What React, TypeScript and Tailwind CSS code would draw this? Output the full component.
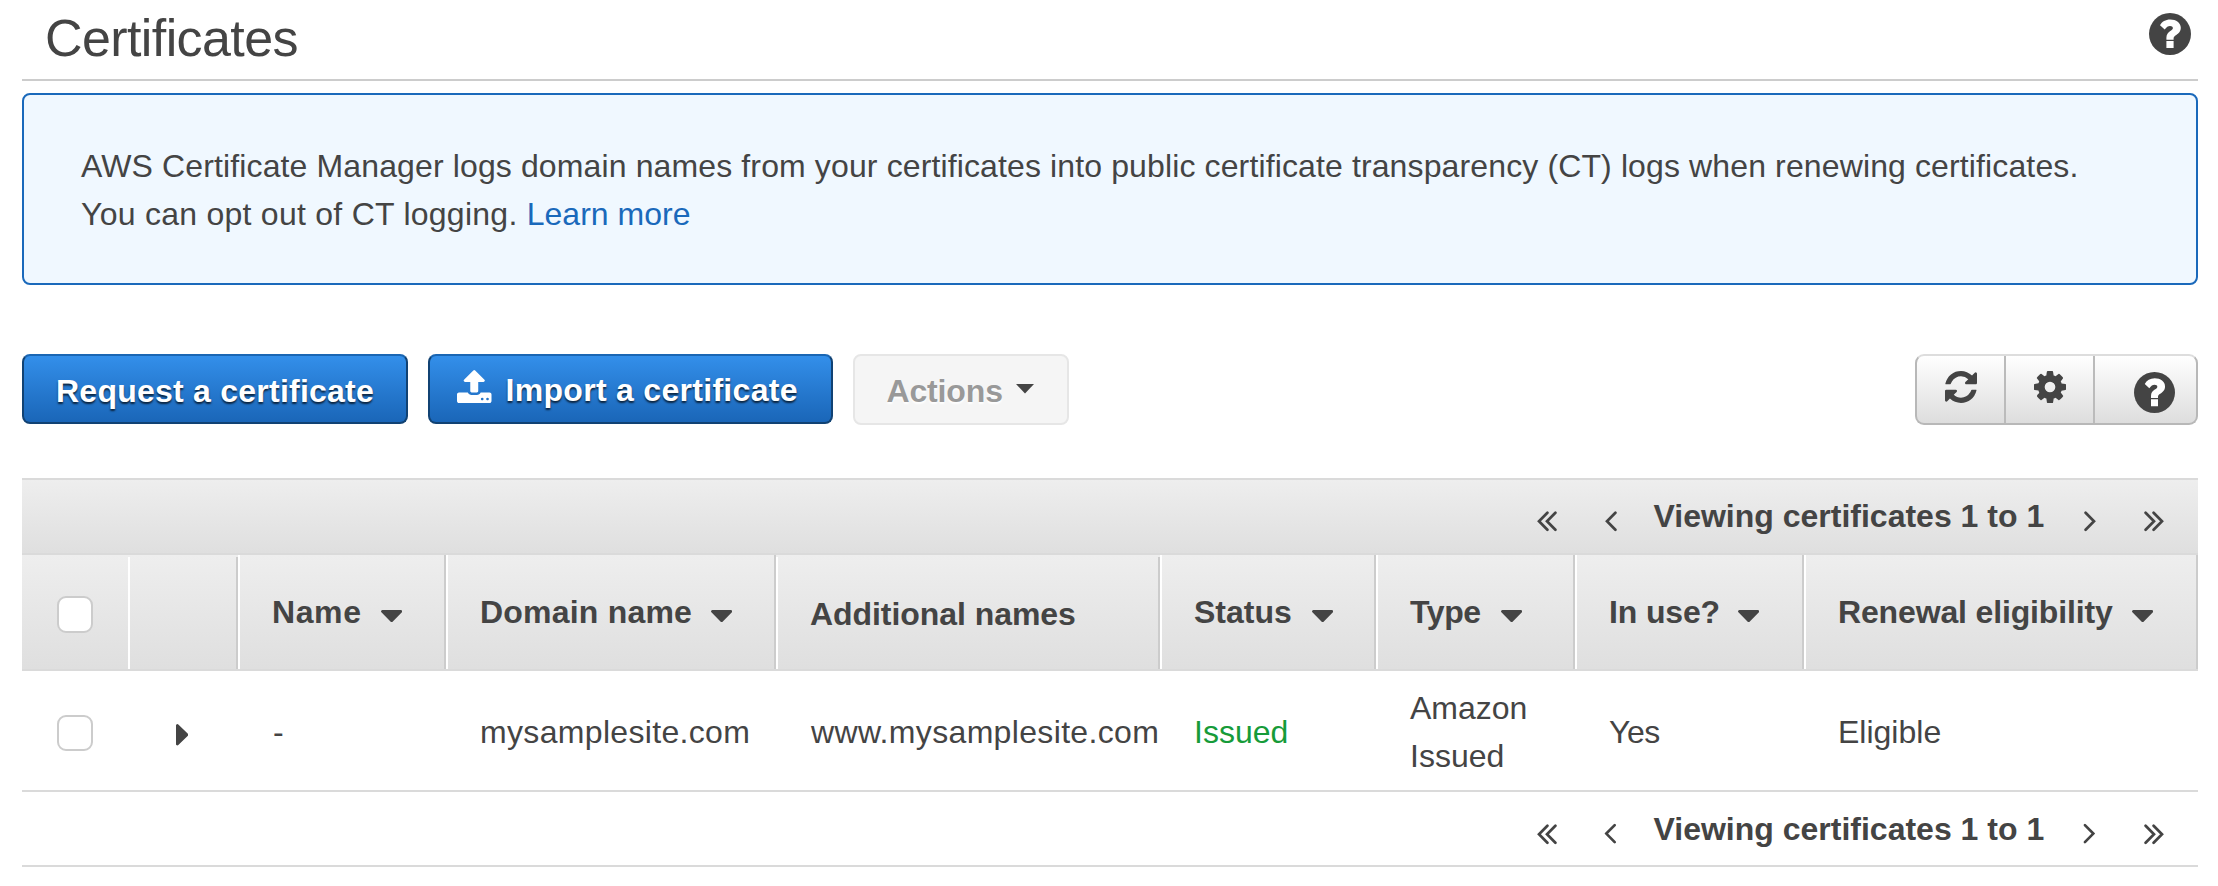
import React from "react";

const REFRESH_PATH =
  "M1639 1056q0 5-1 7-64 268-268 434.500t-478 166.500q-146 0-282.500-55t-243.500-157l-129 129q-19 19-45 19t-45-19-19-45v-448q0-26 19-45t45-19h448q26 0 45 19t19 45-19 45l-137 137q71 66 161 102t187 36q134 0 250-65t186-179q11-17 53-117 8-23 30-23h192q13 0 22.500 9.500t9.500 22.500zm25-800v448q0 26-19 45t-45 19h-448q-26 0-45-19t-19-45 19-45l138-138q-148-137-349-137-134 0-250 65t-186 179q-11 17-53 117-8 23-30 23h-199q-13 0-22.500-9.500t-9.500-22.500v-7q65-268 270-434.500t480-166.500q146 0 284 55.500t245 156.500l130-129q19-19 45-19t45 19 19 45z";
const COG_PATH =
  "M1152 896q0-106-75-181t-181-75-181 75-75 181 75 181 181 75 181-75 75-181zm512-109v222q0 12-8 23t-20 13l-185 28q-19 54-39 91 35 50 107 138 10 12 10 25t-9 23q-27 37-99 108t-94 71q-12 0-26-9l-138-108q-44 23-91 38-16 136-29 186-7 28-36 28h-222q-14 0-24.500-8.500t-11.500-21.500l-28-184q-49-16-90-37l-141 107q-10 9-25 9-14 0-25-11-126-114-165-168-7-10-7-23 0-12 8-23 15-21 51-66.500t54-70.500q-27-50-41-99l-183-27q-13-2-21-12.500t-8-23.500v-222q0-12 8-23t19-13l186-28q14-46 39-92-40-57-107-138-10-12-10-24 0-10 9-23 26-36 98.500-107.500t94.500-71.500q13 0 26 10l138 107q44-23 91-38 16-136 29-186 7-28 36-28h222q14 0 24.500 8.500t11.500 21.500l28 184q49 16 90 37l142-107q9-9 24-9 13 0 25 10 129 119 165 170 7 8 7 22 0 12-8 23-15 21-51 66.500t-54 70.500q26 50 41 98l183 28q13 2 21 12.500t8 23.500z";
const UPLOAD_PATH =
  "M1344 1472q0-26-19-45t-45-19-45 19-19 45 19 45 45 19 45-19 19-45zm256 0q0-26-19-45t-45-19-45 19-19 45 19 45 45 19 45-19 19-45zm128-224v320q0 40-28 68t-68 28h-1472q-40 0-68-28t-28-68v-320q0-40 28-68t68-28h427q21 56 70.500 92t110.500 36h256q61 0 110.500-36t70.500-92h427q40 0 68 28t28 68zm-325-648q-17 40-59 40h-256v448q0 26-19 45t-45 19h-256q-26 0-45-19t-19-45v-448h-256q-42 0-59-40-17-39 14-69l448-448q18-19 45-19t45 19l448 448q31 30 14 69z";
const CARET_DOWN_PATH =
  "M1408 704q0 26-19 45l-448 448q-19 19-45 19t-45-19l-448-448q-19-19-19-45t19-45 45-19h896q26 0 45 19t19 45z";
const CARET_RIGHT_PATH =
  "M1152 896q0 26-19 45l-448 448q-19 19-45 19t-45-19-19-45v-896q0-26 19-45t45-19 45 19l448 448q19 19 19 45z";

function Glyph({ d, box, className }: { d: string; box: string; className: string }) {
  return (
    <svg viewBox={box} fill="currentColor" preserveAspectRatio="none" className={`shrink-0 ${className}`} aria-hidden="true">
      <path d={d} />
    </svg>
  );
}

function HelpIcon({ className }: { className: string }) {
  return (
    <svg viewBox="0 0 42 42" className={`shrink-0 ${className}`} aria-hidden="true">
      <circle cx="21" cy="21" r="21" fill="currentColor" />
      <path
        fill="#fff"
        d="M11 12.200C13 8.700 16.500 6.500 21.200 6.500C27.200 6.500 31.800 9.800 31.800 14.800C31.800 18.600 29.500 20.500 27.300 21.900C25.300 23.100 24.600 24 24.600 25.200V26.700H17.400V24.800C17.400 21.300 19 19.500 21.300 18C23 16.900 23.900 16.200 23.900 15C23.900 13.700 22.700 13 21 13C19 13 17.600 14 15.700 16.600ZM17.400 27.900H24.600V35.100H17.400Z"
      />
    </svg>
  );
}

function Chevron({ double = false, flip = false, className = "" }: { double?: boolean; flip?: boolean; className?: string }) {
  return (
    <svg
      viewBox={double ? "0 0 20 21" : "0 0 12 21"}
      fill="none"
      stroke="currentColor"
      strokeWidth="2.7"
      strokeLinecap="round"
      className={`mt-[19px] h-[21px] shrink-0 ${double ? "w-[20px]" : "w-[12px]"} ${flip ? "-scale-x-100" : ""} ${className}`}
      aria-hidden="true"
    >
      <path d="M10.400 1.800 L2 10.300 L10.400 18.800" />
      {double && <path d="M18.400 1.800 L10 10.300 L18.400 18.800" />}
    </svg>
  );
}

function Pager({ singleClass = "" }: { singleClass?: string }) {
  return (
    <div className="flex justify-end pr-[34px] font-bold">
      <Chevron double />
      <Chevron className={`ml-[48px] ${singleClass}`} />
      <span className="ml-[37px] w-[390.500px] whitespace-nowrap">Viewing certificates 1 to 1</span>
      <Chevron flip className={`ml-[40px] ${singleClass}`} />
      <Chevron double flip className="ml-[48px]" />
    </div>
  );
}

function Checkbox({ className }: { className: string }) {
  return <span role="checkbox" aria-checked="false" className={`block w-9 rounded-[9px] border-2 border-[#ccc] bg-white ${className}`} />;
}

type Column = { label: string; labelClass: string; sortable: boolean };

const columns: Column[] = [
  { label: "Name", labelClass: "w-[109px] tracking-[0.6px]", sortable: true },
  { label: "Domain name", labelClass: "w-[231px] tracking-[0.2px]", sortable: true },
  { label: "Additional names", labelClass: "tracking-[-0.06px]", sortable: false },
  { label: "Status", labelClass: "w-[117.5px]", sortable: true },
  { label: "Type", labelClass: "w-[90.5px] tracking-[-0.4px]", sortable: true },
  { label: "In use?", labelClass: "w-[129px] tracking-[-0.15px]", sortable: true },
  { label: "Renewal eligibility", labelClass: "w-[294px] tracking-[-0.15px]", sortable: true },
];

const GRID = "grid grid-cols-[106px_110px_208px_330px_384px_216px_199px_229px_394px]";

export default function App() {
  return (
    <main className="h-[886px] w-[2218px] overflow-hidden bg-white pr-5 pl-[22px] font-['Liberation_Sans',Arial,sans-serif] text-[32px] leading-[48px] text-[#444]">
      <header className="flex h-[81px] items-start justify-between border-b-2 border-[#ccc] pr-[7px] pl-[23px]">
        <h1 className="mt-2 text-[52px] leading-[60px] tracking-[-0.6px]">Certificates</h1>
        <HelpIcon className="mt-[13px] size-[42px]" />
      </header>

      <section className="mt-3 h-[192px] rounded-[8px] border-2 border-[#1a69bb] bg-[#f0f8ff] pt-[47px] pl-[57px]">
        <p className="tracking-[0.125px] whitespace-nowrap">
          AWS Certificate Manager logs domain names from your certificates into public certificate transparency (CT) logs when renewing certificates.
        </p>
        <p className="tracking-[0.26px] whitespace-nowrap">
          You can opt out of CT logging. <a className="tracking-[0.02px] text-[#1a69bb]">Learn more</a>
        </p>
      </section>

      <div className="mt-[69px] flex h-[71px] items-start font-bold">
        <button className="flex h-[70px] w-[386px] items-start rounded-[8px] border-2 border-[#114273] border-t-[#1a66b3] bg-gradient-to-b from-[#338fea] to-[#1a66b8] pt-[11px] pl-[32px] tracking-[0.24px] whitespace-nowrap text-white [text-shadow:0_2px_2px_rgba(0,0,0,0.7)]">
          Request a certificate
        </button>
        <button className="ml-5 flex h-[70px] w-[405px] items-start rounded-[8px] border-2 border-[#114273] border-t-[#1a66b3] bg-gradient-to-b from-[#338fea] to-[#1a66b8] pt-[10px] pl-[27px] tracking-[0.3px] whitespace-nowrap text-white [text-shadow:0_2px_2px_rgba(0,0,0,0.7)]">
          <Glyph d={UPLOAD_PATH} box="64 64 1664 1600" className="mt-1 h-[33px] w-[34.5px]" />
          <span className="ml-[14px]">Import a certificate</span>
        </button>
        <button className="ml-5 flex h-[71px] w-[216px] items-start rounded-[8px] border-2 border-[#e6e6e6] bg-[#f5f5f5] pt-[11px] pl-[31.5px] text-left tracking-[-0.15px] text-[#999] [text-shadow:0_2px_2px_#fff]">
          <span className="w-[129.5px]">Actions</span>
          <svg viewBox="0 0 18 10" className="mt-[17px] h-[10px] w-[18px] fill-[#444]" aria-hidden="true">
            <path d="M0 0h18L9 9.500z" />
          </svg>
        </button>

        <div className="ml-auto flex h-[71px] w-[283px] overflow-hidden rounded-[9px] border-2 border-[#b8b8b8] border-t-[#ddd] bg-gradient-to-b from-white to-[#ddd]">
          <button className="flex w-[89px] items-start border-r-2 border-[#bbb] pt-[15px] pl-[28px]">
            <Glyph d={REFRESH_PATH} box="128 128 1536 1536" className="size-8" />
          </button>
          <button className="flex w-[89px] items-start border-r-2 border-[#bbb] pt-[15px] pl-[28px]">
            <Glyph d={COG_PATH} box="128 128 1536 1536" className="size-8" />
          </button>
          <button className="flex w-[101px] items-start pt-[15.5px] pl-[38.5px]">
            <HelpIcon className="size-[41px]" />
          </button>
        </div>
      </div>

      <section className="mt-[53px] w-[2176px]">
        <div className="h-[77px] border-y-2 border-[#dadada] bg-gradient-to-b from-[#eee] to-[#dfdfdf] pt-3">
          <Pager />
        </div>

        <div className={`${GRID} h-[116px] border-b-2 border-[#dadada] bg-gradient-to-b from-[#eee] to-[#dfdfdf] font-bold`}>
          <div className="pt-[41px] pl-[35px]">
            <Checkbox className="h-[37px]" />
          </div>
          <div className="mt-[2px] border-x-2 border-r-[#ccc] border-l-white" />
          {columns.map((c) => (
            <div
              key={c.label}
              className={`flex items-start border-x-2 border-r-[#ccc] border-l-white pt-[33px] pl-8 whitespace-nowrap ${c.sortable ? "" : "mt-[2px]"}`}
            >
              <span className={c.labelClass}>{c.label}</span>
              {c.sortable && <Glyph d={CARET_DOWN_PATH} box="384 640 1024 576" className="mt-[22.3px] h-[12.2px] w-[21.3px]" />}
            </div>
          ))}
        </div>

        <div className={`${GRID} h-[121px] border-b-2 border-[#dadada] pt-[37px] whitespace-nowrap`}>
          <div className="pt-[7px] pl-[35px]">
            <Checkbox className="h-9" />
          </div>
          <div className="pt-[16.3px] pl-12">
            <Glyph d={CARET_RIGHT_PATH} box="576 384 576 1024" className="h-[21.5px] w-[12.3px]" />
          </div>
          <div className="pl-[35px]">-</div>
          <div className="pl-[34px] tracking-[0.33px]">mysamplesite.com</div>
          <div className="pl-[35px] tracking-[0.34px]">www.mysamplesite.com</div>
          <div className="pl-[34px] text-[#169b39]">Issued</div>
          <div className="-mt-6 pl-[34px]">
            Amazon
            <br />
            Issued
          </div>
          <div className="pl-[34px] tracking-[-0.5px]">Yes</div>
          <div className="pl-[34px]">Eligible</div>
        </div>

        <div className="h-[75px] border-b-2 border-[#dadada] pt-[13px]">
          <Pager singleClass="-translate-x-[0.7px] -translate-y-[0.7px]" />
        </div>
      </section>
    </main>
  );
}
